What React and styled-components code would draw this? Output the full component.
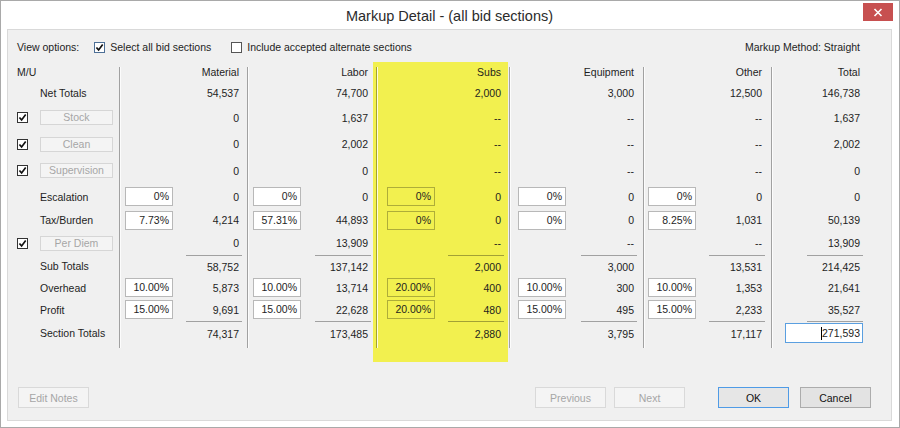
import React from 'react';
import styled, { createGlobalStyle, css } from 'styled-components';

const YELLOW = '#f2f04f';

const GlobalStyle = createGlobalStyle`
  html, body { margin: 0; padding: 0; background: #fff; }
  body {
    font-family: "Liberation Sans", Arial, sans-serif;
    font-size: 10.5px;
    color: #1e1e1e;
  }
`;

const Window = styled.div`
  width: 900px;
  height: 428px;
  box-sizing: border-box;
  border: 1px solid #a9a9a9;
  background: #fff;
  padding: 0 7px 6px 6px;
  display: flex;
  flex-direction: column;
`;

const TitleBar = styled.div`
  height: 28px;
  display: grid;
  grid-template-columns: 1fr auto 1fr;
`;

const Title = styled.div`
  grid-column: 2;
  align-self: center;
  padding-top: 2px;
  font-size: 14.5px;
  color: #2b2b2b;
  white-space: nowrap;
`;

const CloseButton = styled.div`
  grid-column: 3;
  justify-self: end;
  align-self: start;
  margin-top: 2px;
  margin-right: -1px;
  width: 30px;
  height: 18px;
  background: #c75050;
  display: flex;
  align-items: center;
  justify-content: center;
`;

const Panel = styled.div`
  flex: 1;
  border: 1px solid #d9d9d9;
  background: #f0f0f0;
  display: flex;
  flex-direction: column;
`;

const OptionsBar = styled.div`
  height: 32px;
  box-sizing: border-box;
  padding: 2px 31px 0 9px;
  display: flex;
  align-items: center;
  white-space: nowrap;
`;

const ViewLabel = styled.span`
  margin-right: 15px;
`;

const Option = styled.label`
  display: inline-flex;
  align-items: center;
  gap: 5px;
  margin-right: ${(p) => p.$gap || 0}px;
`;

const Method = styled.span`
  margin-left: auto;
`;

const Box = styled.span`
  width: 11px;
  height: 11px;
  box-sizing: border-box;
  border: 1px solid ${(p) => p.$border || '#333'};
  background: #fff;
  display: inline-flex;
  align-items: center;
  justify-content: center;
`;

const Table = styled.div`
  display: grid;
  grid-template-columns: 32px 79px 2px 52px 74px 2px 52px 75px 2px 57px 74px 2px 55px 77px 2px 51px 75px 2px 118px;
  grid-template-rows: 20px 22px 27px 26px 27px 25px 22px 24px 22px 21px 23px 24px 17px;
`;

const Highlight = styled.div`
  grid-column: 9 / 12;
  grid-row: 1 / -1;
  margin-left: -3px;
  margin-right: 1px;
  background: ${YELLOW};
`;

const Divider = styled.div`
  grid-column: ${(p) => p.$col};
  grid-row: 1 / -1;
  margin: 5px 0 14px;
  border-left: 1px solid rgba(0, 0, 0, 0.33);
  border-right: 1px solid rgba(255, 255, 255, 0.85);
`;

const Cell = styled.div`
  grid-row: ${(p) => p.$row};
  grid-column: ${(p) => p.$col};
  display: flex;
  align-items: center;
  white-space: nowrap;
  ${(p) => p.$indent && css`padding-left: ${p.$indent}px;`}
`;

const Value = styled.div`
  grid-row: ${(p) => p.$row};
  grid-column: ${(p) => p.$col};
  justify-self: end;
  margin-right: ${(p) => p.$mr}px;
  width: 56px;
  box-sizing: border-box;
  padding-right: 3px;
  display: flex;
  align-items: center;
  justify-content: flex-end;
  white-space: nowrap;
  ${(p) => p.$rule && css`border-top: 1px solid rgba(0, 0, 0, 0.33);`}
`;

const Pct = styled.div`
  grid-row: ${(p) => p.$row};
  grid-column: ${(p) => p.$col};
  justify-self: end;
  align-self: center;
  width: 48px;
  height: 19px;
  box-sizing: border-box;
  border: 1px solid rgba(0, 0, 0, 0.28);
  background: ${(p) => (p.$hl ? 'transparent' : '#fff')};
  padding-right: 3px;
  text-align: right;
  line-height: 17px;
`;

const CheckSlot = styled.div`
  grid-row: ${(p) => p.$row};
  grid-column: 1;
  display: flex;
  align-items: center;
  padding-left: 9px;
`;

const RowButton = styled.div`
  grid-row: ${(p) => p.$row};
  grid-column: 2;
  align-self: center;
  width: 73px;
  height: 15px;
  box-sizing: border-box;
  border: 1px solid #d6d6d6;
  background: #f4f4f4;
  color: #a6a6a6;
  text-align: center;
  line-height: 13px;
`;

const TotalBox = styled.div`
  grid-row: 12;
  grid-column: 19;
  justify-self: end;
  align-self: end;
  margin: 0 28px 2px 0;
  width: 78px;
  height: 20px;
  box-sizing: border-box;
  border: 1px solid #5a9fe0;
  background: #fff;
  display: flex;
  align-items: center;
  justify-content: flex-end;
  padding-right: 2px;
`;

const Caret = styled.span`
  width: 1px;
  height: 13px;
  background: #000;
`;

const Footer = styled.div`
  flex: 1;
  display: flex;
  align-items: flex-start;
  padding: 25px 20px 0 10px;
`;

const Button = styled.div`
  width: 71px;
  height: 21px;
  box-sizing: border-box;
  margin-left: ${(p) => (p.$push ? 'auto' : `${p.$gap || 0}px`)};
  display: flex;
  align-items: center;
  justify-content: center;
  border: 1px solid #acacac;
  background: #e3e3e3;
  color: #111;
  ${(p) =>
    p.$disabled &&
    css`
      border-color: #d9d9d9;
      background: #f4f4f4;
      color: #a6a6a6;
    `}
  ${(p) =>
    p.$default &&
    css`
      border-color: #4f9be6;
      background: #e6e6e6;
    `}
`;

const Tick = () => (
  <svg width="9" height="9" viewBox="0 0 9 9">
    <path d="M1.4 4.5 L3.6 6.9 L7.7 1.6" stroke="#111" strokeWidth="1.7" fill="none" />
  </svg>
);

const Checkbox = ({ checked, border }) => (
  <Box $border={border}>{checked && <Tick />}</Box>
);

const rows = [
  { label: 'Net Totals' },
  { button: 'Stock' },
  { button: 'Clean' },
  { button: 'Supervision' },
  { label: 'Escalation', pct: 0 },
  { label: 'Tax/Burden', pct: 1 },
  { button: 'Per Diem' },
  { label: 'Sub Totals', rule: true },
  { label: 'Overhead', pct: 2 },
  { label: 'Profit', pct: 3 },
  { label: 'Section Totals', rule: true },
];

const sections = [
  {
    title: 'Material', inCol: 4, valCol: 5, mr: 5,
    pcts: ['0%', '7.73%', '10.00%', '15.00%'],
    values: ['54,537', '0', '0', '0', '0', '4,214', '0', '58,752', '5,873', '9,691', '74,317'],
  },
  {
    title: 'Labor', inCol: 7, valCol: 8, mr: 5,
    pcts: ['0%', '57.31%', '10.00%', '15.00%'],
    values: ['74,700', '1,637', '2,002', '0', '0', '44,893', '13,909', '137,142', '13,714', '22,628', '173,485'],
  },
  {
    title: 'Subs', inCol: 10, valCol: 11, mr: 5, hl: true,
    pcts: ['0%', '0%', '20.00%', '20.00%'],
    values: ['2,000', '--', '--', '--', '0', '0', '--', '2,000', '400', '480', '2,880'],
  },
  {
    title: 'Equipment', inCol: 13, valCol: 14, mr: 6,
    pcts: ['0%', '0%', '10.00%', '15.00%'],
    values: ['3,000', '--', '--', '--', '0', '0', '--', '3,000', '300', '495', '3,795'],
  },
  {
    title: 'Other', inCol: 16, valCol: 17, mr: 6,
    pcts: ['0%', '8.25%', '10.00%', '15.00%'],
    values: ['12,500', '--', '--', '--', '0', '1,031', '--', '13,531', '1,353', '2,233', '17,117'],
  },
  {
    title: 'Total', valCol: 19, mr: 28,
    values: ['146,738', '1,637', '2,002', '0', '0', '50,139', '13,909', '214,425', '21,641', '35,527', ''],
  },
];

const dividers = [3, 6, 9, 12, 15, 18];

export default function App() {
  return (
    <>
      <GlobalStyle />
      <Window>
        <TitleBar>
          <Title>Markup Detail - (all bid sections)</Title>
          <CloseButton>
            <svg width="10" height="9" viewBox="0 0 10 9">
              <path d="M1.5 1 L8.5 8 M8.5 1 L1.5 8" stroke="#fff" strokeWidth="1.6" />
            </svg>
          </CloseButton>
        </TitleBar>
        <Panel>
          <OptionsBar>
            <ViewLabel>View options:</ViewLabel>
            <Option $gap={20}>
              <Checkbox checked border="#4d6f96" />
              Select all bid sections
            </Option>
            <Option>
              <Checkbox border="#555" />
              Include accepted alternate sections
            </Option>
            <Method>Markup Method: Straight</Method>
          </OptionsBar>

          <Table>
            <Highlight />
            {dividers.map((c) => (
              <Divider key={c} $col={c} />
            ))}

            <Cell $row={1} $col="1 / 3" $indent={9}>M/U</Cell>
            {sections.map((s) => (
              <Value key={s.title} $row={1} $col={s.valCol} $mr={s.mr}>
                {s.title}
              </Value>
            ))}

            {rows.map((r, i) => {
              const row = i + 2;
              return (
                <React.Fragment key={row}>
                  {r.button ? (
                    <>
                      <CheckSlot $row={row}>
                        <Checkbox checked />
                      </CheckSlot>
                      <RowButton $row={row}>{r.button}</RowButton>
                    </>
                  ) : (
                    <Cell $row={row} $col={2}>{r.label}</Cell>
                  )}
                  {sections.map((s) => (
                    <React.Fragment key={s.title}>
                      {r.pct !== undefined && s.pcts && (
                        <Pct $row={row} $col={s.inCol} $hl={s.hl}>
                          {s.pcts[r.pct]}
                        </Pct>
                      )}
                      <Value $row={row} $col={s.valCol} $mr={s.mr} $rule={r.rule}>
                        {s.values[i]}
                      </Value>
                    </React.Fragment>
                  ))}
                </React.Fragment>
              );
            })}

            <TotalBox>
              <Caret />
              271,593
            </TotalBox>
          </Table>

          <Footer>
            <Button $disabled>Edit Notes</Button>
            <Button $disabled $push>Previous</Button>
            <Button $disabled $gap={8}>Next</Button>
            <Button $default $gap={33}>OK</Button>
            <Button $gap={11}>Cancel</Button>
          </Footer>
        </Panel>
      </Window>
    </>
  );
}
